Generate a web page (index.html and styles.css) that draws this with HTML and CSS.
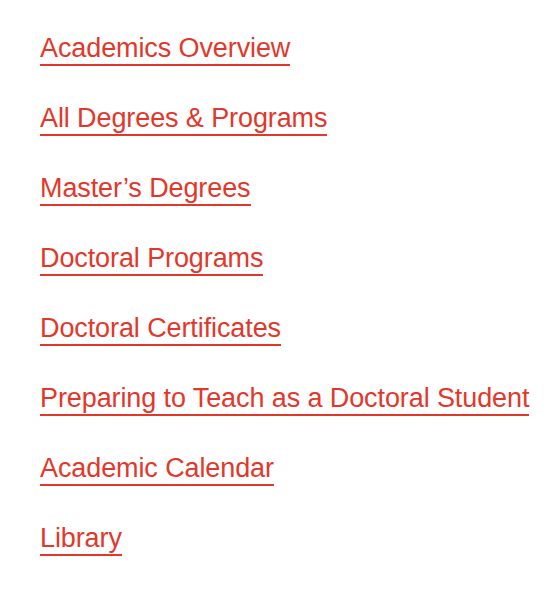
FILE: index.html
```html
<!DOCTYPE html>
<html>
<head>
<meta charset="utf-8">
<link rel="stylesheet" href="styles.css">
</head>
<body>
<ul class="nav">
  <li><a href="#">Academics Overview</a></li>
  <li><a href="#">All Degrees &amp; Programs</a></li>
  <li><a href="#">Master’s Degrees</a></li>
  <li><a href="#">Doctoral Programs</a></li>
  <li><a href="#">Doctoral Certificates</a></li>
  <li><a href="#">Preparing to Teach as a Doctoral Student</a></li>
  <li><a href="#">Academic Calendar</a></li>
  <li><a href="#">Library</a></li>
</ul>
</body>
</html>
```

FILE: styles.css
```css
html, body {
  margin: 0;
  padding: 0;
  background: #ffffff;
}
.nav {
  list-style: none;
  margin: 0;
  padding: 33px 0 0 40px;
  display: flex;
  flex-direction: column;
  align-items: flex-start;
  gap: 37px;
  font-family: "Liberation Sans", Arial, sans-serif;
  font-size: 27px;
  letter-spacing: -0.1px;
  line-height: 31px;
}
.nav li {
  display: block;
}
.nav a {
  display: inline-block;
  color: #e2382c;
  text-decoration: none;
  border-bottom: 2px solid #e2382c;
}
```
